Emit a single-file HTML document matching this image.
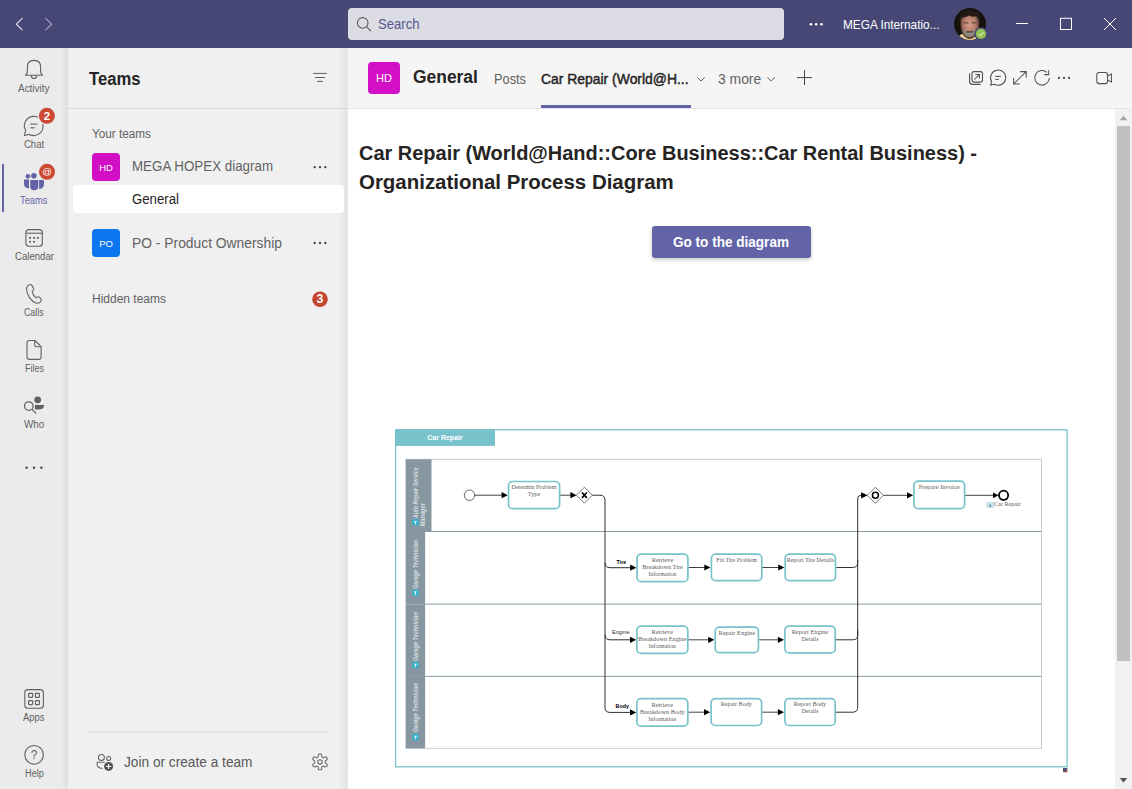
<!DOCTYPE html>
<html><head><meta charset="utf-8">
<style>
html,body{margin:0;padding:0;width:1132px;height:789px;overflow:hidden;background:#fff;font-family:"Liberation Sans",sans-serif;}
.a{position:absolute;}
.t{position:absolute;white-space:nowrap;}
</style></head><body>
<!-- title bar -->
<div class="a" style="left:0;top:0;width:1132px;height:48px;background:#464775;"></div>
<div class="a" style="left:348px;top:8px;width:436px;height:32px;background:#dcdce5;border-radius:4px;"></div>
<!-- left rail -->
<div class="a" style="left:0;top:48px;width:68px;height:741px;background:linear-gradient(to right,#ebebeb 0,#ebebeb 61px,#dfdfdf 68px);"></div>
<!-- teams panel -->
<div class="a" style="left:68px;top:48px;width:280px;height:741px;background:linear-gradient(to right,#f0f0f0 0,#f0f0f0 270px,#e3e3e3 280px);"></div>
<div class="a" style="left:68px;top:108px;width:280px;height:1px;background:#d9d9d9;"></div>
<div class="a" style="left:72.5px;top:185px;width:271px;height:27.5px;background:#fff;border-radius:4px;"></div>
<div class="a" style="left:92px;top:153px;width:28px;height:28px;background:#d20fc4;border-radius:4px;color:#fff;font-size:9.5px;line-height:29px;text-align:center;">HD</div>
<div class="a" style="left:92px;top:229px;width:28px;height:28px;background:#0b76ee;border-radius:4px;color:#fff;font-size:9.5px;line-height:29px;text-align:center;">PO</div>
<div class="a" style="left:88px;top:731px;width:240px;height:2px;background:#e0e0e0;"></div>
<!-- header -->
<div class="a" style="left:348px;top:48px;width:784px;height:60px;background:#f5f5f5;"></div>
<div class="a" style="left:348px;top:108px;width:784px;height:1px;background:#e6e6e6;"></div>
<div class="a" style="left:368px;top:62px;width:32px;height:32px;background:#d20fc4;border-radius:4px;color:#fff;font-size:11px;line-height:32px;text-align:center;">HD</div>
<div class="a" style="left:541px;top:105px;width:150px;height:3px;background:#6264a7;"></div>
<!-- button -->
<div class="a" style="left:652px;top:226px;width:159px;height:32px;background:#6264a7;border-radius:3px;box-shadow:0 2px 4px rgba(0,0,0,0.2);"></div>
<!-- scrollbar -->
<div class="a" style="left:1115px;top:109px;width:17px;height:680px;background:#f1f1f1;"></div>
<div class="a" style="left:1117px;top:126px;width:13px;height:535px;background:#c1c1c1;"></div>
<div class="t" style="left:377.85px;top:17.15px;font-size:14.00px;line-height:14.00px;font-weight:400;color:#55578c;font-family:'Liberation Sans', sans-serif;transform:scaleX(0.9364);transform-origin:0 0;">Search</div>
<div class="t" style="left:843.00px;top:17.57px;font-size:13.50px;line-height:13.50px;font-weight:400;color:#ffffff;font-family:'Liberation Sans', sans-serif;transform:scaleX(0.8748);transform-origin:0 0;">MEGA Internatio...</div>
<div class="t" style="left:17.95px;top:83.83px;font-size:10.00px;line-height:10.00px;font-weight:400;color:#616161;font-family:'Liberation Sans', sans-serif;transform:scaleX(0.9946);transform-origin:0 0;">Activity</div>
<div class="t" style="left:23.50px;top:139.84px;font-size:10.00px;line-height:10.00px;font-weight:400;color:#616161;font-family:'Liberation Sans', sans-serif;transform:scaleX(0.9515);transform-origin:0 0;">Chat</div>
<div class="t" style="left:19.50px;top:195.84px;font-size:10.00px;line-height:10.00px;font-weight:400;color:#6264a7;font-family:'Liberation Sans', sans-serif;transform:scaleX(0.9337);transform-origin:0 0;">Teams</div>
<div class="t" style="left:14.50px;top:251.84px;font-size:10.00px;line-height:10.00px;font-weight:400;color:#616161;font-family:'Liberation Sans', sans-serif;transform:scaleX(0.9607);transform-origin:0 0;">Calendar</div>
<div class="t" style="left:24.00px;top:307.84px;font-size:10.00px;line-height:10.00px;font-weight:400;color:#616161;font-family:'Liberation Sans', sans-serif;transform:scaleX(0.8824);transform-origin:0 0;">Calls</div>
<div class="t" style="left:24.50px;top:363.84px;font-size:10.00px;line-height:10.00px;font-weight:400;color:#616161;font-family:'Liberation Sans', sans-serif;transform:scaleX(0.8937);transform-origin:0 0;">Files</div>
<div class="t" style="left:23.50px;top:419.84px;font-size:10.00px;line-height:10.00px;font-weight:400;color:#616161;font-family:'Liberation Sans', sans-serif;transform:scaleX(0.9872);transform-origin:0 0;">Who</div>
<div class="t" style="left:23.10px;top:712.83px;font-size:10.00px;line-height:10.00px;font-weight:400;color:#616161;font-family:'Liberation Sans', sans-serif;transform:scaleX(0.9431);transform-origin:0 0;">Apps</div>
<div class="t" style="left:24.50px;top:768.83px;font-size:10.00px;line-height:10.00px;font-weight:400;color:#616161;font-family:'Liberation Sans', sans-serif;transform:scaleX(0.9189);transform-origin:0 0;">Help</div>
<div class="t" style="left:89.00px;top:69.76px;font-size:18.00px;line-height:18.00px;font-weight:700;color:#252423;font-family:'Liberation Sans', sans-serif;transform:scaleX(0.9245);transform-origin:0 0;">Teams</div>
<div class="t" style="left:92.00px;top:128.14px;font-size:12.00px;line-height:12.00px;font-weight:400;color:#616161;font-family:'Liberation Sans', sans-serif;transform:scaleX(0.9790);transform-origin:0 0;">Your teams</div>
<div class="t" style="left:131.95px;top:159.15px;font-size:14.00px;line-height:14.00px;font-weight:400;color:#626262;font-family:'Liberation Sans', sans-serif;transform:scaleX(0.9539);transform-origin:0 0;">MEGA HOPEX diagram</div>
<div class="t" style="left:132.30px;top:192.45px;font-size:14.00px;line-height:14.00px;font-weight:400;color:#252423;font-family:'Liberation Sans', sans-serif;transform:scaleX(0.9435);transform-origin:0 0;">General</div>
<div class="t" style="left:132.30px;top:235.65px;font-size:14.00px;line-height:14.00px;font-weight:400;color:#626262;font-family:'Liberation Sans', sans-serif;transform:scaleX(0.9886);transform-origin:0 0;">PO - Product Ownership</div>
<div class="t" style="left:92.00px;top:293.34px;font-size:12.00px;line-height:12.00px;font-weight:400;color:#616161;font-family:'Liberation Sans', sans-serif;">Hidden teams</div>
<div class="t" style="left:124.00px;top:755.15px;font-size:14.00px;line-height:14.00px;font-weight:400;color:#585858;font-family:'Liberation Sans', sans-serif;transform:scaleX(0.9771);transform-origin:0 0;">Join or create a team</div>
<div class="t" style="left:412.70px;top:68.36px;font-size:18.00px;line-height:18.00px;font-weight:700;color:#252423;font-family:'Liberation Sans', sans-serif;transform:scaleX(0.9681);transform-origin:0 0;">General</div>
<div class="t" style="left:493.50px;top:71.75px;font-size:14.00px;line-height:14.00px;font-weight:400;color:#616161;font-family:'Liberation Sans', sans-serif;transform:scaleX(0.9147);transform-origin:0 0;">Posts</div>
<div class="t" style="left:541.40px;top:71.75px;font-size:14.00px;line-height:14.00px;font-weight:400;color:#252423;font-family:'Liberation Sans', sans-serif;transform:scaleX(0.9936);transform-origin:0 0;-webkit-text-stroke:0.45px #252423;">Car Repair (World@H...</div>
<div class="t" style="left:717.70px;top:71.75px;font-size:14.00px;line-height:14.00px;font-weight:400;color:#616161;font-family:'Liberation Sans', sans-serif;transform:scaleX(0.9913);transform-origin:0 0;">3 more</div>
<div class="t" style="left:358.50px;top:142.77px;font-size:20.00px;line-height:20.00px;font-weight:700;color:#252423;font-family:'Liberation Sans', sans-serif;transform:scaleX(0.9980);transform-origin:0 0;">Car Repair (World@Hand::Core Business::Car Rental Business) -</div>
<div class="t" style="left:358.50px;top:171.87px;font-size:20.00px;line-height:20.00px;font-weight:700;color:#252423;font-family:'Liberation Sans', sans-serif;transform:scaleX(1.0221);transform-origin:0 0;">Organizational Process Diagram</div>
<div class="t" style="left:673.40px;top:234.85px;font-size:14.00px;line-height:14.00px;font-weight:700;color:#ffffff;font-family:'Liberation Sans', sans-serif;transform:scaleX(0.9683);transform-origin:0 0;">Go to the diagram</div>
<svg class="a" style="left:0;top:0" width="1132" height="789" viewBox="0 0 1132 789">
<polyline points="22.5,18.2 16.3,24.2 22.5,30.2" fill="none" stroke="#e6e6ee" stroke-width="1.1"/>
<polyline points="45.5,18.2 51.7,24.2 45.5,30.2" fill="none" stroke="#a8a8c4" stroke-width="1.1"/>
<circle cx="362.7" cy="22.9" r="5.3" fill="none" stroke="#5c5c5c" stroke-width="1.1"/>
<line x1="366.5" y1="26.7" x2="370.8" y2="31" stroke="#5c5c5c" stroke-width="1.1"/>
<circle cx="811.0" cy="24.2" r="1.3" fill="#ffffff"/>
<circle cx="816.2" cy="24.2" r="1.3" fill="#ffffff"/>
<circle cx="821.4" cy="24.2" r="1.3" fill="#ffffff"/>
<defs><clipPath id="av"><circle cx="970" cy="24" r="16"/></clipPath><radialGradient id="sk" cx="0.5" cy="0.45" r="0.55"><stop offset="0" stop-color="#d6a08a"/><stop offset="0.6" stop-color="#b07a66"/><stop offset="1" stop-color="#4a3028"/></radialGradient></defs>
<g clip-path="url(#av)"><rect x="954" y="8" width="32" height="32" fill="#17110e"/><path d="M957 41 Q958 35 963 33.5 L972 33.5 Q976 35 978 41 Z" fill="#e9cf9a"/><path d="M960.5 20 Q960 31 963.5 35.5 Q967 39 970 39 Q974 38.5 977 34 Q979.5 29 979 20 Q977 12 970 12 Q962 12 960.5 20 Z" fill="url(#sk)"/><path d="M959 24 Q958 12 966 10.5 Q974 9 979 13 Q982 17 980.5 25 Q979 18 976 16 Q972 17.5 969 15.5 Q965 18 962 17.5 Q960 20 959 24 Z" fill="#241a15"/><path d="M962.5 29 Q963.5 36 969.5 37 Q975.5 36.5 977 29 Q974 31.5 969.5 31.5 Q965 31.5 962.5 29 Z" fill="#8e8a84"/><rect x="966" y="31.2" width="7" height="1.3" fill="#5a3f36"/><rect x="963.5" y="22" width="5" height="1.6" fill="#7d5a4d"/><rect x="971.5" y="22" width="5" height="1.6" fill="#7d5a4d"/></g>
<circle cx="981" cy="33.9" r="6.6" fill="#464775"/>
<circle cx="981" cy="33.9" r="5.1" fill="#92c353"/>
<polyline points="978.6,34 980.3,35.6 983.4,32.4" fill="none" stroke="#fff" stroke-width="1"/>
<line x1="1016" y1="23.5" x2="1028" y2="23.5" stroke="#fff" stroke-width="1"/>
<rect x="1060.5" y="18.3" width="11" height="11.2" fill="none" stroke="#fff" stroke-width="1"/>
<line x1="1104" y1="18" x2="1116" y2="30" stroke="#fff" stroke-width="1"/>
<line x1="1116" y1="18" x2="1104" y2="30" stroke="#fff" stroke-width="1"/>
<rect x="2" y="164" width="2" height="48" fill="#6264a7"/>
<path d="M27.4 72.3 V67 Q27.4 60.4 34 60.4 Q40.6 60.4 40.6 67 V72.3 Q41.5 74 42.6 75.3 H25.4 Q26.5 74 27.4 72.3 Z" fill="none" stroke="#616161" stroke-width="1.1" stroke-linejoin="round"/>
<path d="M31.2 75.6 Q31.5 78.5 34 78.5 Q36.5 78.5 36.8 75.6" fill="none" stroke="#616161" stroke-width="1.1"/>
<path d="M39.3 117.9 Q37 116.3 33.8 116.4 A9.3 9.3 0 0 0 25.6 130.3 L24.4 135.5 L29.3 134.4 Q31.6 135.6 33.8 135.6 A9.3 9.3 0 0 0 43.1 126.2 Q43.1 124.8 42.7 123.7" fill="none" stroke="#616161" stroke-width="1.1" stroke-linejoin="round"/>
<line x1="30.3" y1="124.1" x2="37.6" y2="124.1" stroke="#616161" stroke-width="1.1"/>
<line x1="30.3" y1="127.8" x2="34.8" y2="127.8" stroke="#616161" stroke-width="1.1"/>
<circle cx="46.9" cy="115.8" r="9.2" fill="#ebebeb"/>
<circle cx="46.9" cy="115.8" r="8" fill="#cc4a31"/>
<text x="46.9" y="120" font-family="Liberation Sans" font-weight="700" font-size="11.5" fill="#fff" text-anchor="middle">2</text>
<circle cx="27.9" cy="176.3" r="2.35" fill="#6264a7"/>
<circle cx="33.9" cy="175.8" r="2.8" fill="#6264a7"/>
<path d="M24 179.5 H29 V188.6 Q24 188 24 183.5 Z" fill="#6264a7"/>
<path d="M30.2 179.9 H38.3 V186 Q38.3 190.3 34.25 190.3 Q30.2 190.3 30.2 186 Z" fill="#6264a7"/>
<path d="M39.1 179.9 H44 V184 Q44 188.8 39.1 189 Z" fill="#6264a7"/>
<circle cx="47" cy="171.8" r="9.2" fill="#ebebeb"/>
<circle cx="47" cy="171.8" r="8" fill="#cc4a31"/>
<text x="47" y="175.2" font-family="Liberation Sans" font-weight="400" font-size="9.5" fill="#fff" text-anchor="middle">@</text>
<rect x="25.9" y="229.6" width="16.4" height="16.6" rx="3" fill="none" stroke="#616161" stroke-width="1.1"/>
<line x1="25.9" y1="233.2" x2="42.3" y2="233.2" stroke="#616161" stroke-width="1.1"/>
<circle cx="30.0" cy="237.9" r="1.05" fill="#616161"/>
<circle cx="34.0" cy="237.9" r="1.05" fill="#616161"/>
<circle cx="37.8" cy="237.9" r="1.05" fill="#616161"/>
<circle cx="30.0" cy="241.8" r="1.05" fill="#616161"/>
<circle cx="34.0" cy="241.8" r="1.05" fill="#616161"/>
<path d="M29.3 284.7 Q31 284 32 285.6 L33.5 288 Q34.3 289.4 33 290.6 L32.3 291.3 Q32 292.3 33.3 294.6 Q35 297.3 36.2 297.6 L37.1 297.2 Q38.4 296.3 39.6 297.4 L41 299 Q41.8 300.4 40.6 301.8 Q38.8 303.6 36.5 303.2 Q32.6 302 29.5 297.6 Q26.4 292.8 26.5 288.4 Q26.7 285.9 29.3 284.7 Z" fill="none" stroke="#616161" stroke-width="1.1" stroke-linejoin="round"/>
<path d="M29.2 340.5 H34.9 L41.1 346.7 V357 Q41.1 359.4 38.7 359.4 H29.4 Q27 359.4 27 357 V342.7 Q27 340.5 29.2 340.5 Z" fill="none" stroke="#616161" stroke-width="1.1" stroke-linejoin="round"/>
<path d="M34.7 340.8 V345.2 Q34.7 346.7 36.2 346.7 H40.8" fill="none" stroke="#616161" stroke-width="1.1"/>
<circle cx="28.8" cy="406.1" r="4.3" fill="none" stroke="#616161" stroke-width="1.25"/>
<line x1="31.9" y1="409.2" x2="36.4" y2="413.6" stroke="#616161" stroke-width="1.2"/>
<circle cx="37.7" cy="399.8" r="3.4" fill="#616161"/>
<path d="M34.9 405 H44.1 Q44.1 409.5 38.5 409.6 H34.9 Z" fill="#616161"/>
<circle cx="26.6" cy="467.8" r="1.25" fill="#505050"/>
<circle cx="34.0" cy="467.8" r="1.25" fill="#505050"/>
<circle cx="41.4" cy="467.8" r="1.25" fill="#505050"/>
<rect x="24.8" y="689.6" width="18.6" height="18.6" rx="3" fill="none" stroke="#616161" stroke-width="1.1"/>
<rect x="28.6" y="693.3" width="4" height="4" rx="0.5" fill="none" stroke="#616161" stroke-width="1.15"/>
<rect x="35.4" y="693.3" width="4" height="4" rx="0.5" fill="none" stroke="#616161" stroke-width="1.15"/>
<rect x="28.6" y="700.6" width="4" height="4" rx="0.5" fill="none" stroke="#616161" stroke-width="1.15"/>
<rect x="35.4" y="700.6" width="4" height="4" rx="0.5" fill="none" stroke="#616161" stroke-width="1.15"/>
<circle cx="34.1" cy="754.8" r="9.3" fill="none" stroke="#616161" stroke-width="1.1"/>
<text x="34.1" y="759.3" font-family="Liberation Sans" font-size="12" fill="#616161" text-anchor="middle">?</text>
<line x1="313" y1="73.4" x2="327" y2="73.4" stroke="#616161" stroke-width="1"/>
<line x1="315" y1="77.5" x2="325" y2="77.5" stroke="#616161" stroke-width="1"/>
<line x1="317" y1="81.4" x2="323" y2="81.4" stroke="#616161" stroke-width="1"/>
<circle cx="314.7" cy="167.2" r="1.15" fill="#424242"/>
<circle cx="320.0" cy="167.2" r="1.15" fill="#424242"/>
<circle cx="325.3" cy="167.2" r="1.15" fill="#424242"/>
<circle cx="314.7" cy="243.0" r="1.15" fill="#424242"/>
<circle cx="320.0" cy="243.0" r="1.15" fill="#424242"/>
<circle cx="325.3" cy="243.0" r="1.15" fill="#424242"/>
<circle cx="320" cy="299.2" r="7.8" fill="#c4462f"/>
<text x="320" y="302.9" font-family="Liberation Sans" font-weight="700" font-size="12.3" fill="#fff" text-anchor="middle">3</text>
<circle cx="101.4" cy="757.5" r="3" fill="none" stroke="#616161" stroke-width="1.05"/>
<circle cx="108.6" cy="758.4" r="2" fill="none" stroke="#616161" stroke-width="1.05"/>
<path d="M104.6 762.3 H97.2 V764.6 Q97.2 768.4 102.6 768.4" fill="none" stroke="#616161" stroke-width="1.05"/>
<circle cx="108.6" cy="766.4" r="4.5" fill="#505050"/>
<line x1="106" y1="766.4" x2="111.2" y2="766.4" stroke="#fff" stroke-width="1"/>
<line x1="108.6" y1="763.8" x2="108.6" y2="769" stroke="#fff" stroke-width="1"/>
<polygon points="320.00,753.95 320.28,753.96 320.55,753.98 320.83,754.04 321.09,754.13 321.34,754.31 321.54,754.64 321.67,755.19 321.73,755.86 321.79,756.40 321.88,756.74 322.01,756.94 322.15,757.06 322.31,757.17 322.47,757.26 322.62,757.35 322.78,757.44 322.94,757.53 323.11,757.62 323.30,757.68 323.53,757.69 323.87,757.60 324.37,757.38 324.97,757.10 325.51,756.94 325.90,756.95 326.18,757.07 326.40,757.25 326.58,757.46 326.74,757.69 326.88,757.92 327.02,758.17 327.13,758.42 327.22,758.68 327.27,758.96 327.24,759.26 327.06,759.61 326.64,759.99 326.10,760.38 325.66,760.70 325.41,760.95 325.30,761.15 325.26,761.35 325.25,761.53 325.25,761.72 325.25,761.90 325.25,762.08 325.25,762.27 325.26,762.45 325.30,762.65 325.41,762.85 325.66,763.10 326.10,763.42 326.64,763.81 327.06,764.19 327.24,764.54 327.27,764.84 327.22,765.12 327.13,765.38 327.02,765.63 326.88,765.88 326.74,766.11 326.58,766.34 326.40,766.55 326.18,766.73 325.90,766.85 325.51,766.86 324.97,766.70 324.37,766.42 323.87,766.20 323.53,766.11 323.30,766.12 323.11,766.18 322.94,766.27 322.78,766.36 322.62,766.45 322.47,766.54 322.31,766.63 322.15,766.74 322.01,766.86 321.88,767.06 321.79,767.40 321.73,767.94 321.67,768.61 321.54,769.16 321.34,769.49 321.09,769.67 320.83,769.76 320.55,769.82 320.28,769.84 320.00,769.85 319.72,769.84 319.45,769.82 319.17,769.76 318.91,769.67 318.66,769.49 318.46,769.16 318.33,768.61 318.27,767.94 318.21,767.40 318.12,767.06 317.99,766.86 317.85,766.74 317.69,766.63 317.53,766.54 317.38,766.45 317.22,766.36 317.06,766.27 316.89,766.18 316.70,766.12 316.47,766.11 316.13,766.20 315.63,766.42 315.03,766.70 314.49,766.86 314.10,766.85 313.82,766.73 313.60,766.55 313.42,766.34 313.26,766.11 313.12,765.88 312.98,765.63 312.87,765.38 312.78,765.12 312.73,764.84 312.76,764.54 312.94,764.19 313.36,763.81 313.90,763.42 314.34,763.10 314.59,762.85 314.70,762.65 314.74,762.45 314.75,762.27 314.75,762.08 314.75,761.90 314.75,761.72 314.75,761.53 314.74,761.35 314.70,761.15 314.59,760.95 314.34,760.70 313.90,760.38 313.36,759.99 312.94,759.61 312.76,759.26 312.73,758.96 312.78,758.68 312.87,758.42 312.98,758.17 313.12,757.92 313.26,757.69 313.42,757.46 313.60,757.25 313.82,757.07 314.10,756.95 314.49,756.94 315.03,757.10 315.63,757.38 316.13,757.60 316.47,757.69 316.70,757.68 316.89,757.62 317.06,757.53 317.22,757.44 317.38,757.35 317.53,757.26 317.69,757.17 317.85,757.06 317.99,756.94 318.12,756.74 318.21,756.40 318.27,755.86 318.33,755.19 318.46,754.64 318.66,754.31 318.91,754.13 319.17,754.04 319.45,753.98 319.72,753.96" fill="none" stroke="#616161" stroke-width="1.05" stroke-linejoin="round"/>
<circle cx="320" cy="761.9" r="2.2" fill="none" stroke="#616161" stroke-width="1.05"/>
<polyline points="697.3,77.4 701,81 704.7,77.4" fill="none" stroke="#616161" stroke-width="1"/>
<polyline points="767.4,77.4 771.1,81 774.8,77.4" fill="none" stroke="#616161" stroke-width="1"/>
<line x1="797" y1="77.6" x2="812" y2="77.6" stroke="#424242" stroke-width="1"/>
<line x1="804.5" y1="70.2" x2="804.5" y2="85" stroke="#424242" stroke-width="1"/>
<rect x="972" y="71.6" width="10.5" height="10.5" rx="2" fill="none" stroke="#505050" stroke-width="1.05"/>
<path d="M969.6 73.4 V81.6 Q969.6 84.4 972.4 84.4 H980.6" fill="none" stroke="#505050" stroke-width="1.1"/>
<path d="M974.4 79.5 L979.4 74.5 M975.4 74.5 H979.4 V78.5" fill="none" stroke="#505050" stroke-width="1.05"/>
<path d="M991.6 81.6 A7.6 7.6 0 1 1 994.4 84.3 L990.6 85.2 Z" fill="none" stroke="#505050" stroke-width="1.05" stroke-linejoin="round"/>
<line x1="995.3" y1="76.4" x2="1000.9" y2="76.4" stroke="#505050" stroke-width="1.05"/>
<line x1="995.3" y1="79.4" x2="998.9" y2="79.4" stroke="#505050" stroke-width="1.05"/>
<path d="M1013.6 84 L1026.2 71.6 M1020.2 71.6 H1026.2 V77.6 M1013.6 78 V84 H1019.8" fill="none" stroke="#505050" stroke-width="1.05"/>
<path d="M1049.30 78.05 A7.3 7.3 0 1 1 1046.98 72.46" fill="none" stroke="#505050" stroke-width="1.05"/>
<path d="M1048.7 70.2 V74.6 H1044.3" fill="none" stroke="#505050" stroke-width="1.05"/>
<circle cx="1059" cy="77.9" r="1.1" fill="#424242"/>
<circle cx="1064" cy="77.9" r="1.1" fill="#424242"/>
<circle cx="1069" cy="77.9" r="1.1" fill="#424242"/>
<rect x="1096.8" y="72.4" width="10.8" height="11.2" rx="2.3" fill="none" stroke="#505050" stroke-width="1.05"/>
<path d="M1107.6 76 L1111.4 73.9 V82.1 L1107.6 80" fill="none" stroke="#505050" stroke-width="1.05" stroke-linejoin="round"/>
<polygon points="1119.8,120.2 1123.5,115.8 1127.2,120.2" fill="#a3a3a3"/>
<polygon points="1119.8,778 1123.5,782.4 1127.2,778" fill="#505050"/>
<rect x="395.6" y="429.8" width="671.5" height="337" fill="#fff" stroke="#78c2cb" stroke-width="1.3"/>
<rect x="395" y="429.2" width="100" height="16.7" fill="#78c2cb"/>
<text x="445" y="439.8" font-family="Liberation Sans" font-weight="700" font-size="6.6" fill="#fff" text-anchor="middle" textLength="35.5" lengthAdjust="spacingAndGlyphs">Car Repair</text>
<rect x="406" y="459.3" width="635.5" height="289" fill="#fff" stroke="#c3ccd4" stroke-width="1"/>
<line x1="406" y1="531.5" x2="1041.5" y2="531.5" stroke="#8a9eab" stroke-width="1"/>
<line x1="406" y1="604.1" x2="1041.5" y2="604.1" stroke="#8a9eab" stroke-width="1"/>
<line x1="406" y1="676.4" x2="1041.5" y2="676.4" stroke="#8a9eab" stroke-width="1"/>
<rect x="405.8" y="459.3" width="25.7" height="72" fill="#8797a1"/>
<rect x="405.8" y="532.0" width="19.3" height="72.1" fill="#8797a1"/>
<rect x="405.8" y="604.6" width="19.3" height="71.8" fill="#8797a1"/>
<rect x="405.8" y="676.9" width="19.3" height="71.4" fill="#8797a1"/>
<text transform="translate(418.0 518.2) rotate(-90)" font-family="Liberation Sans" font-style="italic" font-weight="700" font-size="7.2" fill="#d5dce0" textLength="51.0" lengthAdjust="spacingAndGlyphs">Auto Repair Service</text>
<text transform="translate(424.6 526.5) rotate(-90)" font-family="Liberation Sans" font-style="italic" font-weight="700" font-size="7.2" fill="#d5dce0" textLength="23.5" lengthAdjust="spacingAndGlyphs">Manager</text>
<rect x="412.3" y="519.0" width="6.4" height="6.6" rx="1.6" fill="#36b4cf"/>
<rect x="414.2" y="521.0" width="2.6" height="1" fill="#e8f6fa"/>
<rect x="415.0" y="521.3" width="1" height="3" fill="#e8f6fa"/>
<text transform="translate(418.0 588.8) rotate(-90)" font-family="Liberation Sans" font-style="italic" font-weight="700" font-size="7.2" fill="#d5dce0" textLength="49.0" lengthAdjust="spacingAndGlyphs">Garage Technician</text>
<rect x="412.3" y="589.4" width="6.4" height="6.6" rx="1.6" fill="#36b4cf"/>
<rect x="414.2" y="591.4" width="2.6" height="1" fill="#e8f6fa"/>
<rect x="415.0" y="591.7" width="1" height="3" fill="#e8f6fa"/>
<text transform="translate(418.0 661.0) rotate(-90)" font-family="Liberation Sans" font-style="italic" font-weight="700" font-size="7.2" fill="#d5dce0" textLength="49.0" lengthAdjust="spacingAndGlyphs">Garage Technician</text>
<rect x="412.3" y="661.7" width="6.4" height="6.6" rx="1.6" fill="#36b4cf"/>
<rect x="414.2" y="663.7" width="2.6" height="1" fill="#e8f6fa"/>
<rect x="415.0" y="664.0" width="1" height="3" fill="#e8f6fa"/>
<text transform="translate(418.0 732.2) rotate(-90)" font-family="Liberation Sans" font-style="italic" font-weight="700" font-size="7.2" fill="#d5dce0" textLength="49.0" lengthAdjust="spacingAndGlyphs">Garage Technician</text>
<rect x="412.3" y="733.8" width="6.4" height="6.6" rx="1.6" fill="#36b4cf"/>
<rect x="414.2" y="735.8" width="2.6" height="1" fill="#e8f6fa"/>
<rect x="415.0" y="736.1" width="1" height="3" fill="#e8f6fa"/>
<circle cx="469.5" cy="495.2" r="5.2" fill="#fff" stroke="#555" stroke-width="0.9"/>
<line x1="474.7" y1="495.2" x2="502" y2="495.2" stroke="#2e2e2e" stroke-width="0.9"/>
<polygon points="501.6,492.1 507.8,495.2 501.6,498.3" fill="#000"/>
<rect x="508.5" y="481.5" width="51.1" height="27.1" rx="4.2" fill="#fff" stroke="#78c2cb" stroke-width="1.7"/>
<text x="534.0" y="489.1" font-family="Liberation Serif" font-size="6.6" fill="#5a5a5a" text-anchor="middle" textLength="45.0" lengthAdjust="spacingAndGlyphs">Determin Problem</text>
<text x="534.0" y="496.0" font-family="Liberation Serif" font-size="6.6" fill="#5a5a5a" text-anchor="middle" textLength="12.5" lengthAdjust="spacingAndGlyphs">Type</text>
<line x1="560.4" y1="495.2" x2="571" y2="495.2" stroke="#2e2e2e" stroke-width="0.9"/>
<polygon points="570.4,492.1 576.6,495.2 570.4,498.3" fill="#000"/>
<polygon points="584.4,487.2 592.4,495.2 584.4,503.2 576.4,495.2" fill="#fff" stroke="#555" stroke-width="0.8"/>
<path d="M582 492.5 L586.8 497.9 M586.8 492.5 L582 497.9" stroke="#000" stroke-width="1.6"/>
<path d="M592.4 495.2 H600 Q605 495.2 605 500.2 V707.4 Q605 712.4 610 712.4 H630" fill="none" stroke="#2e2e2e" stroke-width="1"/>
<path d="M605 562.7 Q605 567.7 610 567.7 H630.5" fill="none" stroke="#2e2e2e" stroke-width="1"/>
<path d="M605 634.8 Q605 639.8 610 639.8 H630.2" fill="none" stroke="#2e2e2e" stroke-width="1"/>
<polygon points="630.2,564.6 636.4,567.7 630.2,570.8" fill="#000"/>
<polygon points="630.0,636.7 636.2,639.8 630.0,642.9" fill="#000"/>
<polygon points="630.0,709.3 636.2,712.4 630.0,715.5" fill="#000"/>
<text x="616.6" y="564.2" font-family="Liberation Sans" font-weight="700" font-size="5.6" fill="#000" textLength="9.6" lengthAdjust="spacingAndGlyphs">Tire</text>
<text x="611.9" y="634.2" font-family="Liberation Sans" font-weight="400" font-size="5.6" fill="#333" textLength="17.7" lengthAdjust="spacingAndGlyphs">Engine</text>
<text x="615.6" y="708.0" font-family="Liberation Sans" font-weight="700" font-size="5.6" fill="#000" textLength="13.4" lengthAdjust="spacingAndGlyphs">Body</text>
<rect x="637.1" y="554.1" width="50.8" height="27.6" rx="4.2" fill="#fff" stroke="#78c2cb" stroke-width="1.7"/>
<text x="662.5" y="562.4" font-family="Liberation Serif" font-size="6.6" fill="#5a5a5a" text-anchor="middle" textLength="21.6" lengthAdjust="spacingAndGlyphs">Retrieve</text>
<text x="662.5" y="569.3" font-family="Liberation Serif" font-size="6.6" fill="#5a5a5a" text-anchor="middle" textLength="40.7" lengthAdjust="spacingAndGlyphs">Breakdown Tire</text>
<text x="662.5" y="576.2" font-family="Liberation Serif" font-size="6.6" fill="#5a5a5a" text-anchor="middle" textLength="28.0" lengthAdjust="spacingAndGlyphs">Information</text>
<rect x="711.4" y="554.2" width="50.4" height="26.5" rx="4.2" fill="#fff" stroke="#78c2cb" stroke-width="1.7"/>
<text x="736.5" y="561.9" font-family="Liberation Serif" font-size="6.6" fill="#5a5a5a" text-anchor="middle" textLength="40.6" lengthAdjust="spacingAndGlyphs">Fix Tire Problem</text>
<rect x="785.2" y="554.2" width="50.3" height="26.5" rx="4.2" fill="#fff" stroke="#78c2cb" stroke-width="1.7"/>
<text x="810.4" y="561.9" font-family="Liberation Serif" font-size="6.6" fill="#5a5a5a" text-anchor="middle" textLength="47.5" lengthAdjust="spacingAndGlyphs">Report Tire Details</text>
<rect x="636.9" y="626.1" width="50.9" height="27.3" rx="4.2" fill="#fff" stroke="#78c2cb" stroke-width="1.7"/>
<text x="662.3" y="634.4" font-family="Liberation Serif" font-size="6.6" fill="#5a5a5a" text-anchor="middle" textLength="21.5" lengthAdjust="spacingAndGlyphs">Retrieve</text>
<text x="662.3" y="641.3" font-family="Liberation Serif" font-size="6.6" fill="#5a5a5a" text-anchor="middle" textLength="48.5" lengthAdjust="spacingAndGlyphs">Breakdown Engine</text>
<text x="662.3" y="648.2" font-family="Liberation Serif" font-size="6.6" fill="#5a5a5a" text-anchor="middle" textLength="27.0" lengthAdjust="spacingAndGlyphs">Information</text>
<rect x="715.2" y="627.1" width="43.2" height="25.5" rx="4.2" fill="#fff" stroke="#78c2cb" stroke-width="1.7"/>
<text x="736.8" y="634.7" font-family="Liberation Serif" font-size="6.6" fill="#5a5a5a" text-anchor="middle" textLength="36.7" lengthAdjust="spacingAndGlyphs">Repair Engine</text>
<rect x="784.9" y="626.1" width="50.3" height="26.8" rx="4.2" fill="#fff" stroke="#78c2cb" stroke-width="1.7"/>
<text x="810.0" y="633.8" font-family="Liberation Serif" font-size="6.6" fill="#5a5a5a" text-anchor="middle" textLength="36.7" lengthAdjust="spacingAndGlyphs">Report Engine</text>
<text x="810.0" y="640.7" font-family="Liberation Serif" font-size="6.6" fill="#5a5a5a" text-anchor="middle" textLength="17.0" lengthAdjust="spacingAndGlyphs">Details</text>
<rect x="636.9" y="698.6" width="50.9" height="27.6" rx="4.2" fill="#fff" stroke="#78c2cb" stroke-width="1.7"/>
<text x="662.3" y="706.9" font-family="Liberation Serif" font-size="6.6" fill="#5a5a5a" text-anchor="middle" textLength="21.5" lengthAdjust="spacingAndGlyphs">Retrieve</text>
<text x="662.3" y="713.8" font-family="Liberation Serif" font-size="6.6" fill="#5a5a5a" text-anchor="middle" textLength="44.7" lengthAdjust="spacingAndGlyphs">Breakdown Body</text>
<text x="662.3" y="720.7" font-family="Liberation Serif" font-size="6.6" fill="#5a5a5a" text-anchor="middle" textLength="27.6" lengthAdjust="spacingAndGlyphs">Information</text>
<rect x="711.1" y="698.6" width="50.5" height="26.9" rx="4.2" fill="#fff" stroke="#78c2cb" stroke-width="1.7"/>
<text x="736.3" y="706.3" font-family="Liberation Serif" font-size="6.6" fill="#5a5a5a" text-anchor="middle" textLength="31.0" lengthAdjust="spacingAndGlyphs">Repair Body</text>
<rect x="784.9" y="698.6" width="50.3" height="26.9" rx="4.2" fill="#fff" stroke="#78c2cb" stroke-width="1.7"/>
<text x="810.0" y="706.3" font-family="Liberation Serif" font-size="6.6" fill="#5a5a5a" text-anchor="middle" textLength="32.3" lengthAdjust="spacingAndGlyphs">Report Body</text>
<text x="810.0" y="713.2" font-family="Liberation Serif" font-size="6.6" fill="#5a5a5a" text-anchor="middle" textLength="17.0" lengthAdjust="spacingAndGlyphs">Details</text>
<line x1="688.8" y1="567.5" x2="705.5" y2="567.5" stroke="#2e2e2e" stroke-width="0.9"/>
<polygon points="704.3,564.4 710.5,567.5 704.3,570.6" fill="#000"/>
<line x1="762.6" y1="567.5" x2="779.4" y2="567.5" stroke="#2e2e2e" stroke-width="0.9"/>
<polygon points="778.2,564.4 784.4,567.5 778.2,570.6" fill="#000"/>
<line x1="688.6" y1="639.8" x2="709.4" y2="639.8" stroke="#2e2e2e" stroke-width="0.9"/>
<polygon points="708.2,636.7 714.4,639.8 708.2,642.9" fill="#000"/>
<line x1="759.3" y1="639.8" x2="779.0" y2="639.8" stroke="#2e2e2e" stroke-width="0.9"/>
<polygon points="777.8,636.7 784.0,639.8 777.8,642.9" fill="#000"/>
<line x1="688.6" y1="712.2" x2="705.2" y2="712.2" stroke="#2e2e2e" stroke-width="0.9"/>
<polygon points="704.0,709.1 710.2,712.2 704.0,715.3" fill="#000"/>
<line x1="762.4" y1="712.2" x2="779.0" y2="712.2" stroke="#2e2e2e" stroke-width="0.9"/>
<polygon points="777.8,709.1 784.0,712.2 777.8,715.3" fill="#000"/>
<path d="M836.4 567.5 H852.7 Q857.7 567.5 857.7 562.5 V499 Q857.7 495.3 861 495.3 H862" fill="none" stroke="#2e2e2e" stroke-width="1"/>
<path d="M836 639.8 H852.7 Q857.7 639.8 857.7 634.8 V560" fill="none" stroke="#2e2e2e" stroke-width="1"/>
<path d="M836 712.2 H852.7 Q857.7 712.2 857.7 707.2 V630" fill="none" stroke="#2e2e2e" stroke-width="1"/>
<polygon points="861.1,492.2 867.6,495.3 861.1,498.4" fill="#000"/>
<polygon points="875.4,487.3 883.4,495.3 875.4,503.3 867.4,495.3" fill="#fff" stroke="#555" stroke-width="0.8"/>
<circle cx="875.4" cy="495.3" r="3" fill="none" stroke="#000" stroke-width="1.5"/>
<line x1="883.4" y1="495.3" x2="907.5" y2="495.3" stroke="#2e2e2e" stroke-width="0.9"/>
<polygon points="907.0,492.2 913.2,495.3 907.0,498.4" fill="#000"/>
<rect x="914.0" y="481.2" width="50.6" height="27.4" rx="4.2" fill="#fff" stroke="#78c2cb" stroke-width="1.7"/>
<text x="939.2" y="488.8" font-family="Liberation Serif" font-size="6.6" fill="#5a5a5a" text-anchor="middle" textLength="41.0" lengthAdjust="spacingAndGlyphs">Prepare Invoice</text>
<line x1="965.4" y1="495.3" x2="993" y2="495.3" stroke="#2e2e2e" stroke-width="0.9"/>
<polygon points="993.0,492.4 998.6,495.3 993.0,498.2" fill="#000"/>
<circle cx="1003.6" cy="495.3" r="4.6" fill="#fff" stroke="#000" stroke-width="1.8"/>
<rect x="987" y="502.3" width="6.3" height="5.3" fill="#cde8ee" stroke="#8fcbd6" stroke-width="0.5"/>
<rect x="989.2" y="504.8" width="2" height="1.6" fill="#3f7f9a"/>
<text x="994" y="506.2" font-family="Liberation Serif" font-size="6.6" fill="#5a5a5a" textLength="26.8" lengthAdjust="spacingAndGlyphs">Car Repair</text>
<rect x="1063" y="768" width="4.4" height="4.2" fill="#555"/>
<rect x="1063.6" y="768.6" width="1.8" height="1.6" fill="#3050e0"/>
<rect x="1065.4" y="770.2" width="1.6" height="1.6" fill="#e04040"/>
</svg>
</body></html>
